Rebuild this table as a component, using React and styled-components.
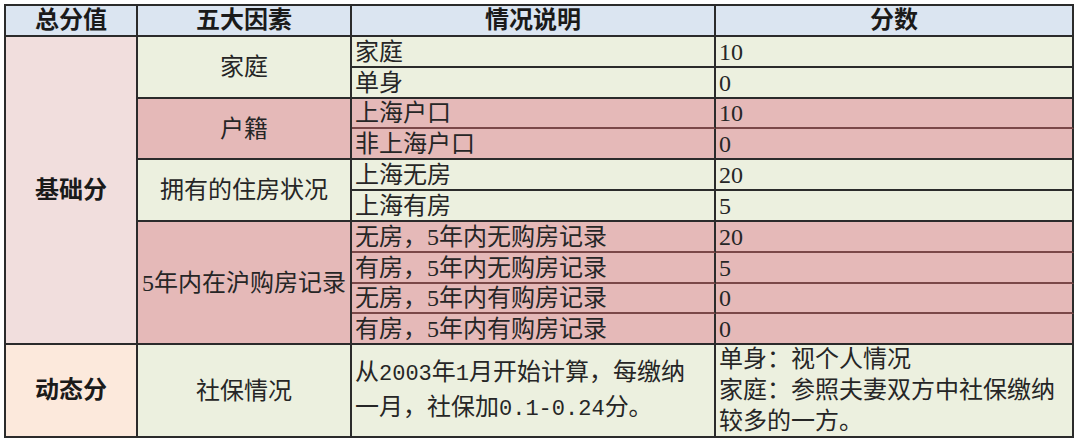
import React from "react";
import styled, { createGlobalStyle } from "styled-components";

const Global = createGlobalStyle`
  html, body { margin: 0; padding: 0; background: #ffffff; }
  body {
    font-family: "Liberation Serif", "Noto Sans CJK SC", serif;
    color: #262626;
  }
`;

const Sheet = styled.div`
  padding: 4px;
  width: 1080px;
  height: 442px;
  box-sizing: border-box;
  overflow: hidden;
`;

const Table = styled.div`
  display: grid;
  grid-template-columns: 132px 214px 364px 358px;
  grid-template-rows: 31px 31px 31px 30px 31px 31px 31px 31px 31px 30px 31px 93px;
  border-top: 2px solid #2b2b2b;
  border-left: 2px solid #2b2b2b;
  width: max-content;
`;

const BG = {
  head: "#dbe5f1",
  base: "#f1dedd",
  dyn: "#fce9dc",
  green: "#ecf0df",
  red: "#e5b9b8",
};

const Cell = styled.div`
  box-sizing: border-box;
  grid-row: span ${(p) => p.$rows || 1};
  background: ${(p) => BG[p.$tone] || "#fff"};
  border-right: 2px solid #2b2b2b;
  border-bottom: 2px solid ${(p) => (p.$soft ? "#7a4848" : "#2b2b2b")};
  display: flex;
  flex-direction: column;
  justify-content: center;
  align-items: ${(p) => (p.$left ? "flex-start" : "center")};
  padding: ${(p) => (p.$left ? "0 0 0 3px" : "0")};
  font-size: 24px;
  line-height: 30px;
  white-space: nowrap;
`;

const HeadCell = styled(Cell)`
  font-weight: 700;
  color: #1a1a1a;
  line-height: 29px;
`;

const Lines = styled.div`
  line-height: ${(p) => p.$lh || 31}px;
`;

const Num = styled.span`
  font-family: "Liberation Mono", monospace;
  font-size: 22px;
`;

const groups = [
  {
    name: "家庭",
    tone: "green",
    rows: [
      ["家庭", "10"],
      ["单身", "0"],
    ],
  },
  {
    name: "户籍",
    tone: "red",
    rows: [
      ["上海户口", "10"],
      ["非上海户口", "0"],
    ],
  },
  {
    name: "拥有的住房状况",
    tone: "green",
    rows: [
      ["上海无房", "20"],
      ["上海有房", "5"],
    ],
  },
  {
    name: "5年内在沪购房记录",
    tone: "red",
    rows: [
      ["无房，5年内无购房记录", "20"],
      ["有房，5年内无购房记录", "5"],
      ["无房，5年内有购房记录", "0"],
      ["有房，5年内有购房记录", "0"],
    ],
  },
];

export default function App() {
  const cells = [];
  groups.forEach((g, gi) => {
    g.rows.forEach((r, ri) => {
      const last = ri === g.rows.length - 1;
      const soft = g.tone === "red" && !last;
      if (gi === 0 && ri === 0) {
        cells.push(
          <HeadCell key="base" $tone="base" $rows={10}>
            基础分
          </HeadCell>
        );
      }
      if (ri === 0) {
        cells.push(
          <Cell key={`g${gi}`} $tone={g.tone} $rows={g.rows.length}>
            {g.name}
          </Cell>
        );
      }
      cells.push(
        <Cell key={`d${gi}-${ri}`} $tone={g.tone} $left $soft={soft}>
          {r[0]}
        </Cell>
      );
      cells.push(
        <Cell key={`s${gi}-${ri}`} $tone={g.tone} $left $soft={soft}>
          {r[1]}
        </Cell>
      );
    });
  });

  return (
    <>
      <Global />
      <Sheet>
        <Table>
          <HeadCell $tone="head">总分值</HeadCell>
          <HeadCell $tone="head">五大因素</HeadCell>
          <HeadCell $tone="head">情况说明</HeadCell>
          <HeadCell $tone="head">分数</HeadCell>
          {cells}
          <HeadCell $tone="dyn">动态分</HeadCell>
          <Cell $tone="green">社保情况</Cell>
          <Cell $tone="green" $left>
            <Lines $lh={32}>
              从<Num>2003</Num>年<Num>1</Num>月开始计算，每缴纳
              <br />
              一月，社保加<Num>0.1-0.24</Num>分。
            </Lines>
          </Cell>
          <Cell $tone="green" $left>
            <Lines $lh={31}>
              单身：视个人情况
              <br />
              家庭：参照夫妻双方中社保缴纳
              <br />
              较多的一方。
            </Lines>
          </Cell>
        </Table>
      </Sheet>
    </>
  );
}
